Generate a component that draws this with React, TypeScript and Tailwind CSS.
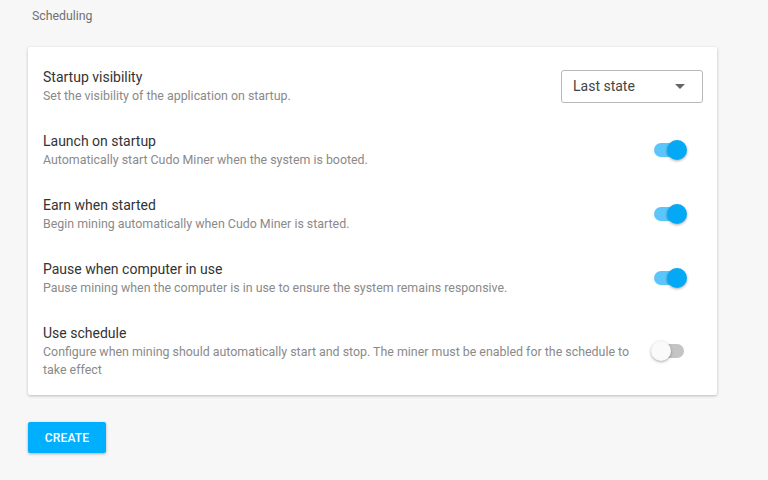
const rows = [
  {
    title: "Launch on startup",
    desc: "Automatically start Cudo Miner when the system is booted.",
    on: true,
  },
  {
    title: "Earn when started",
    desc: "Begin mining automatically when Cudo Miner is started.",
    on: true,
  },
  {
    title: "Pause when computer in use",
    desc: "Pause mining when the computer is in use to ensure the system remains responsive.",
    on: true,
  },
  {
    title: "Use schedule",
    desc: "Configure when mining should automatically start and stop. The miner must be enabled for the schedule to take effect",
    on: false,
  },
]

function Toggle({ on }: { on: boolean }) {
  return (
    <div className="relative w-[36px] h-[20px] flex items-center">
      <div
        className={`mx-[3px] h-[14px] w-[30px] rounded-full ${on ? "bg-[#5cc6fb]" : "bg-[#c4c4c4]"}`}
      />
      <div
        className={`absolute top-0 w-[20px] h-[20px] rounded-full shadow-[0_1px_3px_rgba(0,0,0,0.35)] ${
          on ? "right-0 bg-[#03a9f4]" : "left-0 bg-[#fafafa]"
        }`}
      />
    </div>
  )
}

export default function App() {
  return (
    <div className="min-h-[480px] w-[768px] bg-[#f7f7f7] font-['Roboto',sans-serif]">
      <div className="px-[32px] pt-[8px] text-[12.3px] leading-[16px] text-[#707070]">Scheduling</div>
      <div className="mx-[28px] mt-[23px] w-[689px] bg-white rounded-[2px] shadow-[0_1px_3px_rgba(0,0,0,0.25)] pl-[15px] pr-[14px] pt-[20px] pb-[16px] flex flex-col gap-[26px]">
        <div className="flex items-center">
          <div className="flex-1">
            <div className="text-[14px] leading-[20px] text-[#333]">Startup visibility</div>
            <div className="text-[12.4px] leading-[18px] text-[#8a8a8a]">
              Set the visibility of the application on startup.
            </div>
          </div>
          <div className="w-[142px] h-[33px] border border-[#b8b8b8] rounded-[3px] flex items-center justify-between pl-[11px] pr-[17px]">
            <span className="text-[14px] text-[#444]">Last state</span>
            <svg width="10" height="5" viewBox="0 0 10 5">
              <path d="M0 0 L10 0 L5 5 Z" fill="#666" />
            </svg>
          </div>
        </div>
        {rows.map((r) => (
          <div key={r.title} className="flex items-center">
            <div className="flex-1 pr-[20px]">
              <div className="text-[14px] leading-[20px] text-[#333]">{r.title}</div>
              <div className="text-[12.4px] leading-[18px] text-[#8a8a8a]">{r.desc}</div>
            </div>
            <div className="mr-[16px]">
              <Toggle on={r.on} />
            </div>
          </div>
        ))}
      </div>
      <button className="ml-[28px] mt-[27px] w-[78px] h-[31px] bg-[#00b0ff] rounded-[2px] text-white text-[12px] font-medium tracking-[0.2px] shadow-[0_1px_3px_rgba(0,0,0,0.3)]">
        CREATE
      </button>
    </div>
  )
}
